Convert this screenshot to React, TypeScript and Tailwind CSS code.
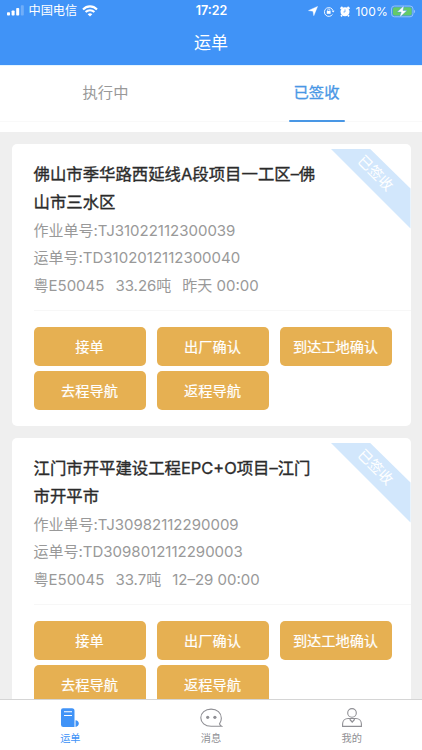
import clsx from "clsx"

const orders = [
  {
    title: ["佛山市季华路西延线A段项目一工区–佛", "山市三水区"],
    jobNo: "TJ31022112300039",
    waybillNo: "TD3102012112300040",
    plate: "粤E50045",
    weight: "33.26吨",
    time: "昨天 00:00",
  },
  {
    title: ["江门市开平建设工程EPC+O项目–江门", "市开平市"],
    jobNo: "TJ30982112290009",
    waybillNo: "TD3098012112290003",
    plate: "粤E50045",
    weight: "33.7吨",
    time: "12–29 00:00",
  },
]

const actions = ["接单", "出厂确认", "到达工地确认", "去程导航", "返程导航"]

function StatusBar() {
  return (
    <div className="flex h-[22px] items-center justify-between pl-[7px] pr-1.5 text-[11.5px] leading-none">
      <div className="flex w-[150px] items-center">
        <svg width="18" height="11" viewBox="0 0 18 11" fill="currentColor">
          <rect x="0" y="7.2" width="3" height="3.3" rx="0.8" />
          <rect x="4.6" y="5.5" width="3" height="5" rx="0.8" />
          <rect x="9.2" y="3" width="3" height="7.5" rx="0.8" />
          <rect x="13.8" y="0.3" width="3" height="10.2" rx="0.8" opacity="0.25" />
        </svg>
        <span className="ml-[3.5px] text-[12.2px]">中国电信</span>
        <svg className="ml-[5px]" width="16" height="12" viewBox="0 0 16 12" fill="none" stroke="currentColor" strokeWidth="2.1">
          <path d="M1 4.4C5 .3 11 .3 15 4.4" />
          <path d="M3.6 7.1c2.5-2.5 6.3-2.5 8.8 0" />
          <path d="M8 11.5 5.7 9.2c1.3-1.2 3.3-1.2 4.6 0z" fill="currentColor" stroke="none" />
        </svg>
      </div>
      <span className="text-[12.5px] font-semibold">17:22</span>
      <div className="flex w-[150px] items-center justify-end">
        <svg width="10" height="10" viewBox="0 0 10 10" fill="currentColor">
          <path d="M9.6.4 5.8 9.7 5 5.2.5 4.6z" stroke="currentColor" strokeWidth="0.4" />
        </svg>
        <svg className="ml-[5px]" width="12" height="11" viewBox="0 0 12 11" fill="none" stroke="currentColor">
          <path d="M9.5 8.4A4.4 4.4 0 1 1 10 4.6" strokeWidth="0.9" />
          <path d="M8.6 4.8h3L10.2 6.6z" fill="currentColor" stroke="none" />
          <rect x="3.8" y="5" width="3.8" height="2.8" fill="currentColor" stroke="none" />
          <path d="M4.7 5V4c0-1.5 2.2-1.5 2.2 0v1" strokeWidth="0.7" />
        </svg>
        <svg className="ml-[5px]" width="10" height="11" viewBox="0 0 10 11">
          <circle cx="5" cy="5.7" r="4.5" fill="currentColor" />
          <path d="m.5 2.8 2-2M9.5 2.8l-2-2M2 9.2l-1 1.2M8 9.2l1 1.2" stroke="currentColor" strokeWidth="1.7" />
          <path d="M5 3.4v2.6H3.4" fill="none" stroke="#4093f7" strokeWidth="0.7" />
        </svg>
        <span className="ml-[5px] pt-px text-[12px] tracking-[0.2px]">100%</span>
        <svg className="ml-[3px]" width="25" height="13" viewBox="0 0 25 13">
          <rect x="0.5" y="1" width="21.5" height="10.8" rx="3" fill="none" stroke="#a9cefa" strokeWidth="0.8" />
          <rect x="1.8" y="2.3" width="18.9" height="8.2" rx="1.8" fill="#65ca68" />
          <path d="M23.2 4.8v3.4c1.2-.5 1.2-2.9 0-3.4z" fill="#a9cefa" />
          <path d="M13 .6 6.2 7h4L8.6 12.5 16 5.5h-4z" fill="white" stroke="#4093f7" strokeWidth="0.4" />
        </svg>
      </div>
    </div>
  )
}

function Ribbon() {
  return (
    <div className="absolute right-0 top-[5px] flex h-20 w-20 items-center justify-center overflow-hidden">
      <div className="absolute inset-0 bg-[#d2e7fc] [clip-path:polygon(0_0,49%_0,100%_50%,100%_100%)]" />
      <span className="relative -top-[15px] left-[5px] rotate-45 text-[14.3px] leading-none text-white">
        已签收
      </span>
    </div>
  )
}

function OrderCard({ order }: { order: (typeof orders)[number] }) {
  return (
    <article className="relative h-[282px] shrink-0 rounded-[5px] bg-white pl-[22px] pt-4">
      <Ribbon />
      <h2 className="text-[16.4px] leading-[28.2px] text-[#2b2b2b] [-webkit-text-stroke:0.35px_#2b2b2b]">
        {order.title.map((line) => (
          <span key={line} className="block whitespace-nowrap">
            {line}
          </span>
        ))}
      </h2>
      <div className="whitespace-nowrap pt-[0.7px] text-[15px] leading-[27.6px] text-[#999]">
        <p>作业单号:{order.jobNo}</p>
        <p>运单号:{order.waybillNo}</p>
        <p className="flex gap-[11px]">
          <span>{order.plate}</span>
          <span>{order.weight}</span>
          <span>{order.time}</span>
        </p>
      </div>
      <div className="mt-[11.1px] grid grid-cols-[repeat(3,112px)] gap-x-[11px] gap-y-[5px] border-t border-[#f7f7f7] pt-4">
        {actions.map((label) => (
          <button
            key={label}
            className="h-[39px] rounded-[5px] bg-[#e6b052] text-[14.2px] text-white [-webkit-text-stroke:0.2px_white]"
          >
            {label}
          </button>
        ))}
      </div>
    </article>
  )
}

function WaybillIcon() {
  return (
    <svg width="20" height="20" viewBox="0 0 20 20" fill="#4093f7">
      <path d="M3 .3h9A2.5 2.5 0 0 1 14.5 2.8V19H3.2A2.2 2.2 0 0 1 1 16.8V2.3A2 2 0 0 1 3 .3z" />
      <path d="M15.5 12.3c1.9 0 3.3 1.5 3.3 3.3s-1.4 3.3-3.3 3.3z" />
      <path d="M4 3.8h8M4 7.5h8" stroke="white" strokeWidth="1.1" />
    </svg>
  )
}

function MessageIcon() {
  return (
    <svg width="24" height="20" viewBox="0 0 24 20" fill="none" stroke="#8f8f94">
      <path d="M18.3 18.2h4.2c-1.1-.7-1.7-1.4-2-2.4A8.5 8.5 0 0 0 22.3 10c0-5-4.2-8.9-10.2-8.9S1.8 5 1.8 9.8s4.2 8.4 10.3 8.4h6.2" strokeWidth="1.1" />
      <circle cx="8.7" cy="9.3" r="1.6" fill="#8f8f94" stroke="none" />
      <circle cx="15.9" cy="9.3" r="1.6" fill="#8f8f94" stroke="none" />
    </svg>
  )
}

function ProfileIcon() {
  return (
    <svg width="22" height="20" viewBox="0 0 22 20" fill="none" stroke="#8f8f94">
      <circle cx="11" cy="4.9" r="4.3" strokeWidth="1.1" />
      <path d="M7.2 10.5h7.6c3.4 0 5.6 2.4 5.6 5.6v2.3H1.6v-2.3c0-3.2 2.2-5.6 5.6-5.6z" strokeWidth="1.1" />
      <path d="m8.7 11.3 2.5 2.8 2.5-2.8" strokeWidth="1.3" />
    </svg>
  )
}

const navItems = [
  { label: "运单", icon: <WaybillIcon />, active: true },
  { label: "消息", icon: <MessageIcon />, active: false },
  { label: "我的", icon: <ProfileIcon />, active: false },
]

export default function App() {
  return (
    <div className="flex h-[750px] w-[422px] flex-col overflow-hidden bg-[#efefef] font-['Inter','Noto_Sans_CJK_SC',sans-serif]">
      <header className="h-[65px] shrink-0 bg-[#4093f7] text-white">
        <StatusBar />
        <h1 className="pt-[9px] text-center text-[17px] leading-[25px]">运单</h1>
      </header>

      <div className="h-[67px] shrink-0 border-t border-[#e5f5ff] bg-white">
        <div className="grid h-[56px] grid-cols-2 border-b border-[#f9f9f9] text-[15.3px]">
          <button className="text-[#999]">执行中</button>
          <button className="relative text-[#4997e5] [-webkit-text-stroke:0.3px_#4997e5]">
            已签收
            <span className="absolute -bottom-px left-1/2 h-0.5 w-14 -translate-x-1/2 rounded-full bg-[#4997e5]" />
          </button>
        </div>
      </div>

      <main className="flex min-h-0 flex-1 flex-col gap-3 overflow-hidden px-[11.5px] pt-[11.5px]">
        {orders.map((order) => (
          <OrderCard key={order.jobNo} order={order} />
        ))}
      </main>

      <nav className="grid h-[51px] shrink-0 grid-cols-3 border-t border-[#d5d5d5] bg-white">
        {navItems.map((item) => (
          <button
            key={item.label}
            className={clsx(
              "flex flex-col items-center pt-2 text-[10.2px] leading-none",
              item.active ? "text-[#4093f7]" : "text-[#8f8f94]"
            )}
          >
            {item.icon}
            <span className="mt-[5px]">{item.label}</span>
          </button>
        ))}
      </nav>
    </div>
  )
}
